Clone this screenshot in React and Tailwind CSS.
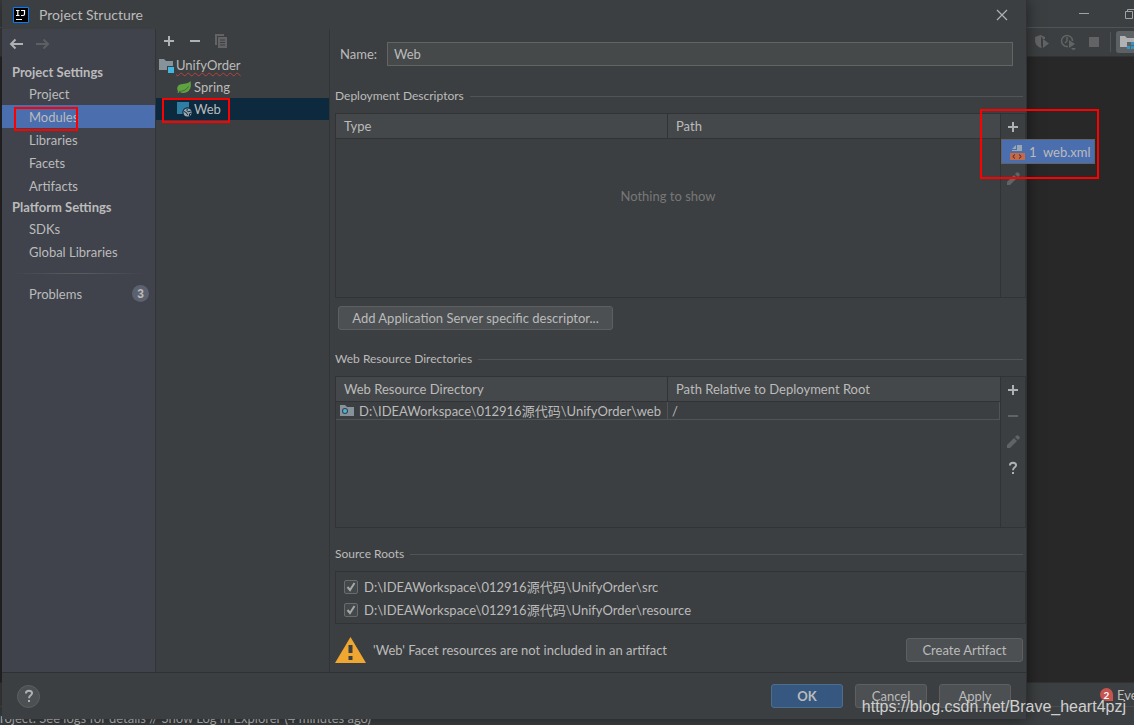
import React, { useState } from "react";

const settingsGroups = [
  {
    title: "Project Settings",
    items: ["Project", "Modules", "Libraries", "Facets", "Artifacts"],
  },
  {
    title: "Platform Settings",
    items: ["SDKs", "Global Libraries"],
  },
];

const sourceRoots = [
  "D:\\IDEAWorkspace\\012916源代码\\UnifyOrder\\src",
  "D:\\IDEAWorkspace\\012916源代码\\UnifyOrder\\resource",
];

function PlusIcon() {
  return (
    <svg width="16" height="16" viewBox="0 0 16 16">
      <path d="M3 7h4V3h2v4h4v2H9v4H7V9H3z" fill="#afb1b3" />
    </svg>
  );
}

function MinusIcon({ disabled }) {
  return (
    <svg width="16" height="16" viewBox="0 0 16 16">
      <path d="M3 7h10v2H3z" fill={disabled ? "#616364" : "#afb1b3"} />
    </svg>
  );
}

function PencilIcon() {
  return (
    <svg width="16" height="16" viewBox="0 0 16 16" fill="#616364">
      <path d="M2 11l7-7 3 3-7 7H2z" />
      <path d="M10 3l1.500-1.500q1-.8 2 .2l.8.8q1 1 .2 2L13 6z" />
    </svg>
  );
}

function HelpIcon() {
  return (
    <svg width="16" height="16" viewBox="0 0 16 16">
      <path
        d="M4.900 5.500C4.900 3.600 6.200 2.700 8 2.700s3.100 1 3.100 2.600C11.100 7.300 8 7.400 8 10.200"
        fill="none"
        stroke="#afb1b3"
        strokeWidth="1.900"
      />
      <path d="M7 12h2v2H7z" fill="#afb1b3" />
    </svg>
  );
}

function ModuleIcon() {
  return (
    <svg width="16" height="16" viewBox="0 0 16 16">
      <path d="M1 2h5l2 2h7v5H9v4H1z" fill="#87939a" />
      <path d="M10 10h6v6h-6z" fill="#40b6e0" />
    </svg>
  );
}

function SpringIcon() {
  return (
    <svg width="16" height="16" viewBox="0 0 16 16">
      <path
        d="M14.500 2c.8 4 .6 8-2.500 10.500-2.500 1.800-6 1.700-8.500.5L2 14l-.6-.7.7-1C.6 10 1 7 4 5.600 7.500 4.200 12 5.500 14.500 2z"
        fill="#5fa341"
      />
      <path d="M3 12.500c4-.2 7.500-1.500 9.500-5" fill="none" stroke="#3c5a34" strokeWidth="0.8" />
    </svg>
  );
}

function WebFacetIcon() {
  return (
    <svg width="16" height="16" viewBox="0 0 16 16">
      <path d="M1 1h12v5.500a5.200 5.200 0 0 0-6.500 6.500H1z" fill="#2e7fa3" />
      <circle cx="11.500" cy="11.500" r="4" fill="#9aa7b0" />
      <path
        d="M8 10.500l2.500 1.200.5 1.300 1.200 1M11.500 8l-.8 1.400 1.500 1.300 2.500-.5M13.500 15v-2.200l1.500-.6"
        fill="none"
        stroke="#0d293e"
        strokeWidth="1"
      />
    </svg>
  );
}

function WebXmlIcon() {
  return (
    <svg width="16" height="16" viewBox="0 0 16 16">
      <path d="M7 1v4H3z" fill="#9aa7b0" />
      <path d="M8 1h5v6H3V6h5z" fill="#9aa7b0" />
      <path d="M1 9h15v7H1z" fill="#c4694a" />
      <path d="M6 10.500L3.800 12.500 6 14.500M10 10.500l2.200 2-2.200 2" fill="none" stroke="#3b2620" />
    </svg>
  );
}

function SectionTitle({ children }) {
  return (
    <div className="flex h-5 items-center gap-1.5 pr-[3px]">
      <h2 className="text-[12px]">{children}</h2>
      <div className="h-px flex-1 bg-[#515456]" />
    </div>
  );
}

function DialogButton({ children, className }) {
  return (
    <button
      type="button"
      className={`h-6 rounded-[3px] border text-[13px] leading-5 ${className}`}
    >
      {children}
    </button>
  );
}

function TableHead({ columns }) {
  return (
    <thead>
      <tr className="h-[25px] bg-[#45484a]">
        {columns.map((column) => (
          <th
            key={column}
            className="border-b border-[#313335] pl-2 text-left font-normal not-last:border-r"
          >
            {column}
          </th>
        ))}
      </tr>
    </thead>
  );
}

function IdeBackground() {
  return (
    <div className="flex min-h-screen flex-col bg-[#282828]">
      <div className="flex h-7 items-center justify-end gap-[34px] border-b border-[#515456] bg-[#3c3f41]">
        <svg width="12" height="12" viewBox="0 0 12 12">
          <path d="M1 5.500h10" stroke="#a0a2a3" />
        </svg>
        <svg width="10" height="12" viewBox="0 0 10 12" fill="none" stroke="#a0a2a3">
          <path d="M1.500 3.500h7v7h-7zM3.500 3V1.500H12" />
        </svg>
      </div>
      <div className="flex h-[29px] items-center justify-end border-b border-[#323232] bg-[#3c3f41]">
        <div className="flex gap-2.5">
          <svg width="16" height="16" viewBox="0 0 16 16" fill="#616364">
            <path d="M1 3l5.500-2L11 3v2H8.500V3.500L7 3v9l1 1-1.500 1C3 12 1 10 1 7z" />
            <path d="M9 5l6 4.500L9 14z" />
          </svg>
          <svg width="16" height="16" viewBox="0 0 16 16">
            <path d="M8 12.400A5.500 5.500 0 1 1 12.500 7" fill="none" stroke="#616364" strokeWidth="1.500" />
            <path d="M7 3v4L5 9" fill="none" stroke="#616364" strokeWidth="1.500" />
            <path d="M9 6l6 4-6 4zM11 14h5l-2.500 2.500z" fill="#616364" />
          </svg>
          <svg width="16" height="16" viewBox="0 0 16 16">
            <path d="M3 3h10v10H3z" fill="#616364" />
          </svg>
        </div>
        <div className="mr-[5px] ml-2 h-5 w-px bg-[#515456]" />
        <div className="flex h-[22px] w-[18px] items-center overflow-hidden rounded-l-[3px] bg-[#5c6164] pl-1">
          <svg width="16" height="16" viewBox="0 0 16 16" className="shrink-0">
            <path d="M0 2h5l2 2h8v4H7v5H0z" fill="#afb1b3" />
            <path d="M11 8h3v3h-3zM7 12h3v3H7zM11 12h3v3h-3z" fill="#3592c4" />
          </svg>
        </div>
      </div>
      <div className="flex-1" />
      <div className="flex h-6 items-center justify-end gap-1 border-t border-[#323232] bg-[#3c3f41]">
        <span className="flex h-[13px] w-[13px] items-center justify-center rounded-full rounded-br-none bg-[#c75450] text-[10px] font-bold text-white">
          2
        </span>
        <span className="w-[17px] whitespace-nowrap">Eve</span>
      </div>
      <div className="flex h-[19px] items-center border-t border-[#4a4d4f] bg-[#3c3f41] pt-1 whitespace-nowrap">
        roject: See logs for details // Show Log in Explorer (4 minutes ago)
      </div>
    </div>
  );
}

function SettingsSidebar({ selected, onSelect }) {
  return (
    <nav className="flex w-[154px] shrink-0 flex-col border-r border-[#323537] bg-[#40434c]">
      <div className="mb-1 flex h-[29px] items-center gap-2.5 px-1.5">
        <button type="button" aria-label="Back">
          <svg width="16" height="16" viewBox="0 0 16 16" fill="none" stroke="#afb1b3" strokeWidth="2">
            <path d="M15 8H3M7.500 3.500L3 8l4.500 4.500" />
          </svg>
        </button>
        <button type="button" aria-label="Forward">
          <svg width="16" height="16" viewBox="0 0 16 16" fill="none" stroke="#5c5f63" strokeWidth="2">
            <path d="M2 8h12M9.500 3.500L14 8l-4.500 4.500" />
          </svg>
        </button>
      </div>
      {settingsGroups.map((group) => (
        <div key={group.title} className="flex flex-col">
          <h2 className="flex h-5 items-center pl-2.5 font-bold">{group.title}</h2>
          {group.items.map((item) => (
            <button
              key={item}
              type="button"
              onClick={() => onSelect(item)}
              className={`h-[23px] pl-[27px] text-left ${
                selected === item ? "bg-[#4b6eaf]" : ""
              }`}
            >
              {item}
            </button>
          ))}
        </div>
      ))}
      <div className="mx-2.5 mt-2.5 mb-2 h-px bg-linear-to-r from-transparent via-[#5a5d60] to-transparent" />
      <button type="button" className="flex h-[23px] items-center justify-between pr-1.5 pl-[27px]">
        Problems
        <span className="flex h-[17px] w-[17px] items-center justify-center rounded-full bg-[#5c6170] font-['Liberation_Sans',sans-serif] text-[12px] font-bold">
          3
        </span>
      </button>
    </nav>
  );
}

function ModuleTree() {
  return (
    <div className="flex w-[174px] shrink-0 flex-col border-r border-[#323537]">
      <div className="flex h-[25px] items-center gap-2.5 pb-0.5 pl-[5px]">
        <button type="button" aria-label="Add module">
          <PlusIcon />
        </button>
        <button type="button" aria-label="Remove module">
          <MinusIcon />
        </button>
        <button type="button" aria-label="Copy module">
          <svg width="16" height="16" viewBox="0 0 16 16">
            <path d="M2 1h9v2H4v9H2z" fill="#616364" />
            <path d="M5 4h9v11H5z" fill="#616364" />
            <path d="M7 7h5M7 9.500h5M7 12h5" stroke="#3c3f41" />
          </svg>
        </button>
      </div>
      <ul>
        <li className="flex h-[22px] items-center gap-0.5 pl-0.5">
          <ModuleIcon />
          <span className="underline decoration-[#bc3f3c] decoration-wavy decoration-1 underline-offset-2">
            UnifyOrder
          </span>
        </li>
        <li className="flex h-[22px] items-center gap-0.5 pl-5">
          <SpringIcon />
          Spring
        </li>
        <li className="relative flex h-[22px] items-center gap-0.5 bg-[#0d293e] pl-5">
          <WebFacetIcon />
          Web
          <div className="pointer-events-none absolute top-0 left-1.5 h-[25px] w-[68px] border-2 border-[#ff0000]" />
        </li>
      </ul>
    </div>
  );
}

function FacetEditor() {
  const [name, setName] = useState("Web");

  return (
    <main className="flex min-w-0 flex-1 flex-col pl-[5px]">
      <div className="flex items-center pt-[13px] pr-[13px] pl-[5px]">
        <label htmlFor="facet-name" className="w-[47px]">
          Name:
        </label>
        <input
          id="facet-name"
          value={name}
          onChange={(e) => setName(e.target.value)}
          className="h-6 min-w-0 flex-1 border border-[#646464] bg-[#45494a] px-1.5 outline-none"
        />
      </div>

      <div className="mt-5">
        <SectionTitle>Deployment Descriptors</SectionTitle>
      </div>
      <div className="mt-[7px] flex h-[185px] border border-[#313335]">
        <div className="flex flex-1 flex-col">
          <table className="w-full table-fixed border-separate border-spacing-0">
            <TableHead columns={["Type", "Path"]} />
          </table>
          <p className="pt-[47px] text-center text-[#777777]">Nothing to show</p>
        </div>
        <div className="flex w-[25px] flex-col items-center gap-2.5 border-l border-[#313335] pt-[5px]">
          <div className="relative h-4">
            <button type="button" aria-label="Add descriptor" className="block">
              <PlusIcon />
            </button>
            <div className="pointer-events-none absolute -top-[10px] -left-[25px] z-10 h-[70px] w-[119px] border-2 border-[#ff0000]" />
            <button
              type="button"
              className="absolute top-5 -left-1 z-20 flex h-[25px] w-[94px] items-center gap-1 border border-[#616364] bg-[#4b6eaf] pl-[7px] whitespace-pre"
            >
              <WebXmlIcon />
              {"1  web.xml"}
            </button>
          </div>
          <MinusIcon disabled />
          <PencilIcon />
        </div>
      </div>

      <div className="mt-2 pl-[3px]">
        <DialogButton className="w-[275px] border-[#5e6060] bg-[#4c5052]">
          Add Application Server specific descriptor...
        </DialogButton>
      </div>

      <div className="mt-[19px]">
        <SectionTitle>Web Resource Directories</SectionTitle>
      </div>
      <div className="mt-[7px] flex h-38 border border-[#313335]">
        <div className="flex-1">
          <table className="w-full table-fixed border-separate border-spacing-0">
            <TableHead columns={["Web Resource Directory", "Path Relative to Deployment Root"]} />
            <tbody>
              <tr className="h-[18px] leading-4">
                <td className="border-r border-b border-[#515456] pl-[3px] whitespace-nowrap">
                  <div className="flex items-center gap-1">
                    <svg width="16" height="16" viewBox="0 0 16 16">
                      <path d="M1 2h5l2 2h7v9H1z" fill="#87939a" />
                      <circle cx="6" cy="8" r="3" fill="#3c3f41" />
                      <circle cx="6" cy="8" r="2" fill="#40b6e0" />
                    </svg>
                    {"D:\\IDEAWorkspace\\012916源代码\\UnifyOrder\\web"}
                  </div>
                </td>
                <td className="border-r border-b border-[#515456] pl-1">/</td>
              </tr>
            </tbody>
          </table>
        </div>
        <div className="flex w-[25px] flex-col items-center gap-2.5 border-l border-[#313335] pt-[5px]">
          <PlusIcon />
          <MinusIcon disabled />
          <PencilIcon />
          <HelpIcon />
        </div>
      </div>

      <div className="mt-4">
        <SectionTitle>Source Roots</SectionTitle>
      </div>
      <div className="mt-[7px] border border-[#313335] pt-[3px] pb-0.5 pl-2">
        {sourceRoots.map((root) => (
          <label key={root} className="flex h-[23px] items-center gap-1.5">
            <span className="grid">
              <input
                type="checkbox"
                defaultChecked
                className="peer col-start-1 row-start-1 h-3.5 w-3.5 appearance-none rounded-[2px] border border-[#6b6b6b] bg-[#43494a]"
              />
              <svg
                width="14"
                height="14"
                viewBox="0 0 14 14"
                className="pointer-events-none invisible col-start-1 row-start-1 peer-checked:visible"
              >
                <path d="M3.500 7l2.500 3 4.500-7" fill="none" stroke="#a7a7a7" strokeWidth="2" />
              </svg>
            </span>
            {root}
          </label>
        ))}
      </div>

      <div className="mt-3 flex items-center pr-[3px]">
        <svg width="32" height="28" viewBox="0 0 32 28">
          <path d="M15.500 1L31 27H0z" fill="#f0a732" />
          <path d="M13.500 9h4v8h-4zM13.500 20h4v4h-4z" fill="#3c3f41" />
        </svg>
        <p className="flex-1 pl-1.5">'Web' Facet resources are not included in an artifact</p>
        <DialogButton className="w-[117px] border-[#5e6060] bg-[#4c5052]">
          Create Artifact
        </DialogButton>
      </div>
    </main>
  );
}

export default function App() {
  const [section, setSection] = useState("Modules");

  return (
    <div className="relative min-h-screen overflow-hidden font-['Comic_Sans_MS','Lato','Noto_Sans_CJK_SC',sans-serif] text-[13px] leading-5 text-[#bbbbbb]">
      <IdeBackground />

      {/* Project Structure window, floating over the IDE */}
      <div className="absolute top-0 right-[107px] bottom-1.5 left-0.5 flex flex-col border-r border-[#2f3133] bg-[#3c3f41] shadow-[0_0_14px_rgba(0,0,0,0.5)]">
        <header className="flex h-[29px] shrink-0 items-center gap-2.5 pr-[17px] pl-[11px]">
          <svg width="16" height="16" viewBox="0 0 16 16">
            <path d="M.5.5h15v15H.5z" fill="#000000" stroke="#087cfa" />
            <path
              d="M3 3.500h3.500M4.800 3.500v5M3 8.500h3.500M8 3.500h3.500v3.500q0 1.500-1.500 1.500H8M3 12.500h6"
              fill="none"
              stroke="#ffffff"
              strokeWidth="1.200"
            />
          </svg>
          <h1 className="flex-1 text-[14px]">Project Structure</h1>
          <button type="button" aria-label="Close">
            <svg width="14" height="14" viewBox="0 0 14 14">
              <path d="M2 2l10 10M12 2L2 12" stroke="#afb1b3" strokeWidth="1.200" />
            </svg>
          </button>
        </header>

        <div className="relative flex min-h-0 flex-1">
          <SettingsSidebar selected={section} onSelect={setSection} />
          <ModuleTree />
          <FacetEditor />
          <div className="pointer-events-none absolute top-[78px] left-3 h-6 w-16 border-2 border-[#ff0000]" />
        </div>

        <footer className="flex h-[47px] shrink-0 items-center gap-3 border-t border-[#2f3133] pr-[15px] pl-[15px]">
          <button
            type="button"
            aria-label="Help"
            className="mr-auto flex h-[23px] w-[23px] items-center justify-center rounded-full border border-[#5e6060] bg-[#4c5052]"
          >
            <HelpIcon />
          </button>
          <DialogButton className="w-[72px] border-[#4c708c] bg-[#365880] font-bold">
            OK
          </DialogButton>
          <DialogButton className="w-[72px] border-[#5e6060] bg-[#4c5052]">Cancel</DialogButton>
          <DialogButton className="w-[72px] border-[#5e6060] bg-[#4c5052]">Apply</DialogButton>
        </footer>
      </div>

      <p className="absolute right-2 bottom-1.5 font-['Liberation_Sans',sans-serif] text-[16px] leading-6 text-[#d0d0d0]">
        https://blog.csdn.net/Brave_heart4pzj
      </p>
    </div>
  );
}
